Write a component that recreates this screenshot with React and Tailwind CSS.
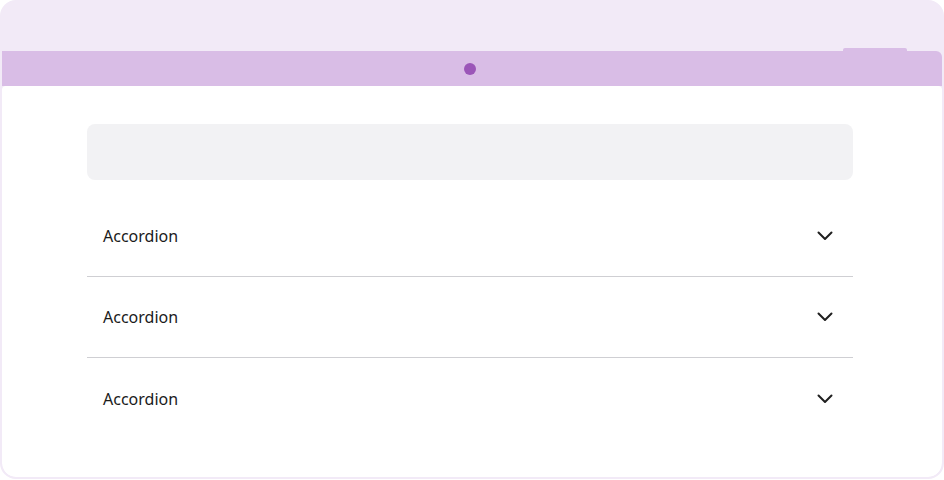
const Chevron = () => (
    <svg width="16" height="10" viewBox="0 0 16 10" fill="none">
        <path d="M1.5 1.5 L8 8 L14.5 1.5" stroke="#1f1f1f" strokeWidth="2" strokeLinecap="round" strokeLinejoin="round" />
    </svg>
);

const AccordionRow = ({ label, last }) => (
    <div className={`h-[81px] flex items-center justify-between pl-4 pr-5 ${last ? "" : "border-b border-[#cfcfd3]"}`}>
        <span className="text-[16px] text-[#1a1a1a]">{label}</span>
        <Chevron />
    </div>
);

const App = () => {
    const rows = ["Accordion", "Accordion", "Accordion"];

    return (
        <div className="w-[944px] h-[480px] bg-white" style={{ fontFamily: '"Noto Sans", "Open Sans", sans-serif' }}>
            <div className="h-[479px] rounded-2xl bg-[#f2eaf7] border-2 border-[#f2eaf7] flex flex-col overflow-hidden">
                <div className="h-[49px] flex justify-end pr-[35px]">
                    <div className="self-end w-[64px] h-[3px] bg-[#d9bde6] rounded-t-[2px]" />
                </div>
                <div className="h-[35px] bg-[#d9bde6] flex items-center justify-center pr-1 rounded-tr-md">
                    <div className="w-3 h-3 rounded-full bg-[#9b56b8]" />
                </div>
                <div className="flex-1 bg-white rounded-t-[4px] rounded-b-[14px] pl-[85px] pr-[89px] pt-[38px]">
                    <div className="h-[56px] rounded-lg bg-[#f2f2f4]" />
                    <div className="mt-4">
                        {rows.map((r, i) => (
                            <AccordionRow key={i} label={r} last={i === rows.length - 1} />
                        ))}
                    </div>
                </div>
            </div>
        </div>
    );
};

export default App;
